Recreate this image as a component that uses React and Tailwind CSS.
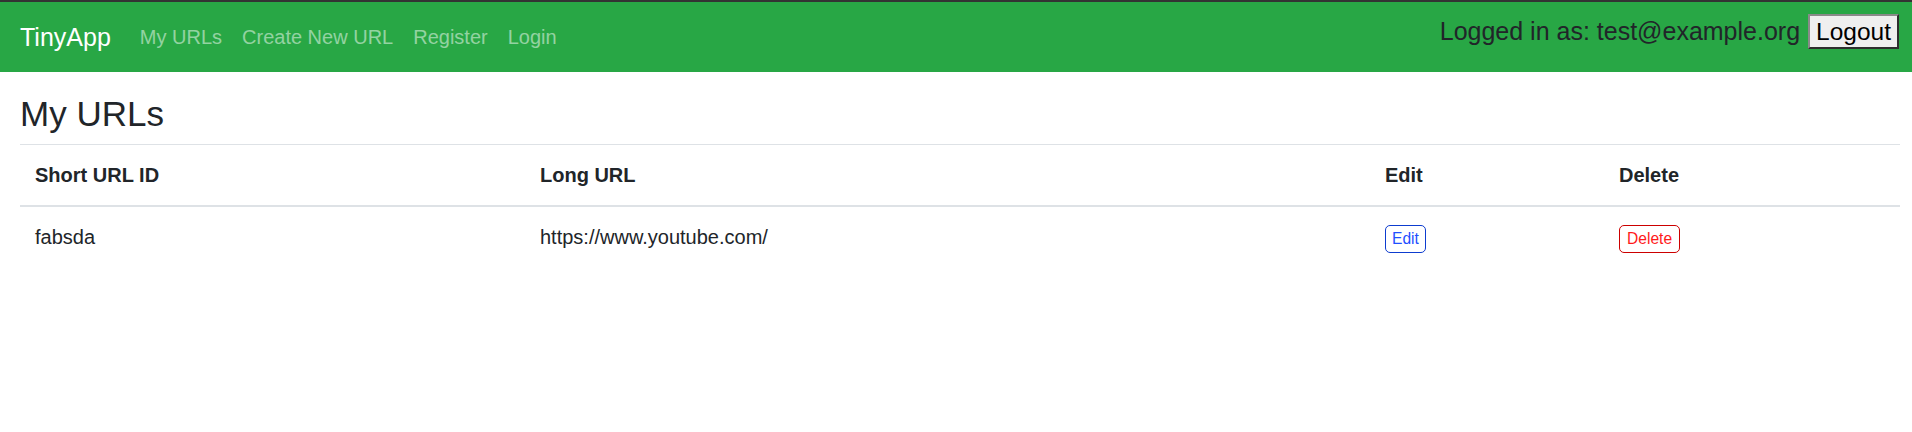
import React from 'react';

const urls = [
  { id: 'fabsda', longURL: 'https://www.youtube.com/' },
];

const navLinks = ['My URLs', 'Create New URL', 'Register', 'Login'];

export default function App() {
  return (
    <div className="min-h-[432px] bg-white font-['Liberation_Sans',Arial,sans-serif] text-[#212529]">
      {/* ─── Navbar ─────────────────────────────────────────── */}
      <nav className="flex h-[72px] items-center border-t-2 border-[#333333] bg-[#28a745] pl-[20px] pr-[13px]">
        <a className="mr-[19px] text-[25px] leading-[36px] text-white">TinyApp</a>
        <ul className="flex">
          {navLinks.map(l => (
            <li key={l}>
              <a className="block px-[10px] text-[20px] leading-[30px] text-white/50">{l}</a>
            </li>
          ))}
        </ul>
        <div className="mb-[11px] ml-auto flex items-baseline gap-[8px] text-[25px]">
          <span className="leading-[29px]">Logged in as: test@example.org</span>
          <button className="border-2 border-l-[#8a8a8a] border-t-[#8a8a8a] border-r-[#2e2e2e] border-b-[#2e2e2e] bg-[#efefef] px-[6px] py-[1px] text-[24.5px] leading-[29px] text-black">
            Logout
          </button>
        </div>
      </nav>

      {/* ─── Content ────────────────────────────────────────── */}
      <main className="pl-[20px] pr-[12px]">
        <h3 className="mb-[10.5px] mt-[21.5px] text-[35px] font-normal leading-[40px]">My URLs</h3>
        <table className="w-full border-collapse text-left text-[20px] leading-[30px]">
          <colgroup>
            <col className="w-[505px]" />
            <col className="w-[845px]" />
            <col className="w-[234px]" />
            <col />
          </colgroup>
          <thead>
            <tr className="border-t border-[#dee2e6]">
              <th className="border-b-2 border-[#dee2e6] p-[15px] align-top font-bold">Short URL ID</th>
              <th className="border-b-2 border-[#dee2e6] p-[15px] align-top font-bold">Long URL</th>
              <th className="border-b-2 border-[#dee2e6] p-[15px] align-top font-bold">Edit</th>
              <th className="border-b-2 border-[#dee2e6] p-[15px] align-top font-bold">Delete</th>
            </tr>
          </thead>
          <tbody>
            {urls.map(u => (
              <tr key={u.id}>
                <td className="p-[15px] align-top">{u.id}</td>
                <td className="p-[15px] align-top">{u.longURL}</td>
                <td className="p-[15px] align-top">
                  <button className="inline-block rounded-[5px] border border-[#0d3ccf] px-[6px] py-[3px] text-[15.6px] leading-[20px] text-[#1f4fff]">
                    Edit
                  </button>
                </td>
                <td className="p-[15px] align-top">
                  <button className="inline-block rounded-[5px] border border-[#cc0000] px-[7px] py-[3px] text-[15.6px] leading-[20px] text-[#ff1a1a]">
                    Delete
                  </button>
                </td>
              </tr>
            ))}
          </tbody>
        </table>
      </main>
    </div>
  );
}
